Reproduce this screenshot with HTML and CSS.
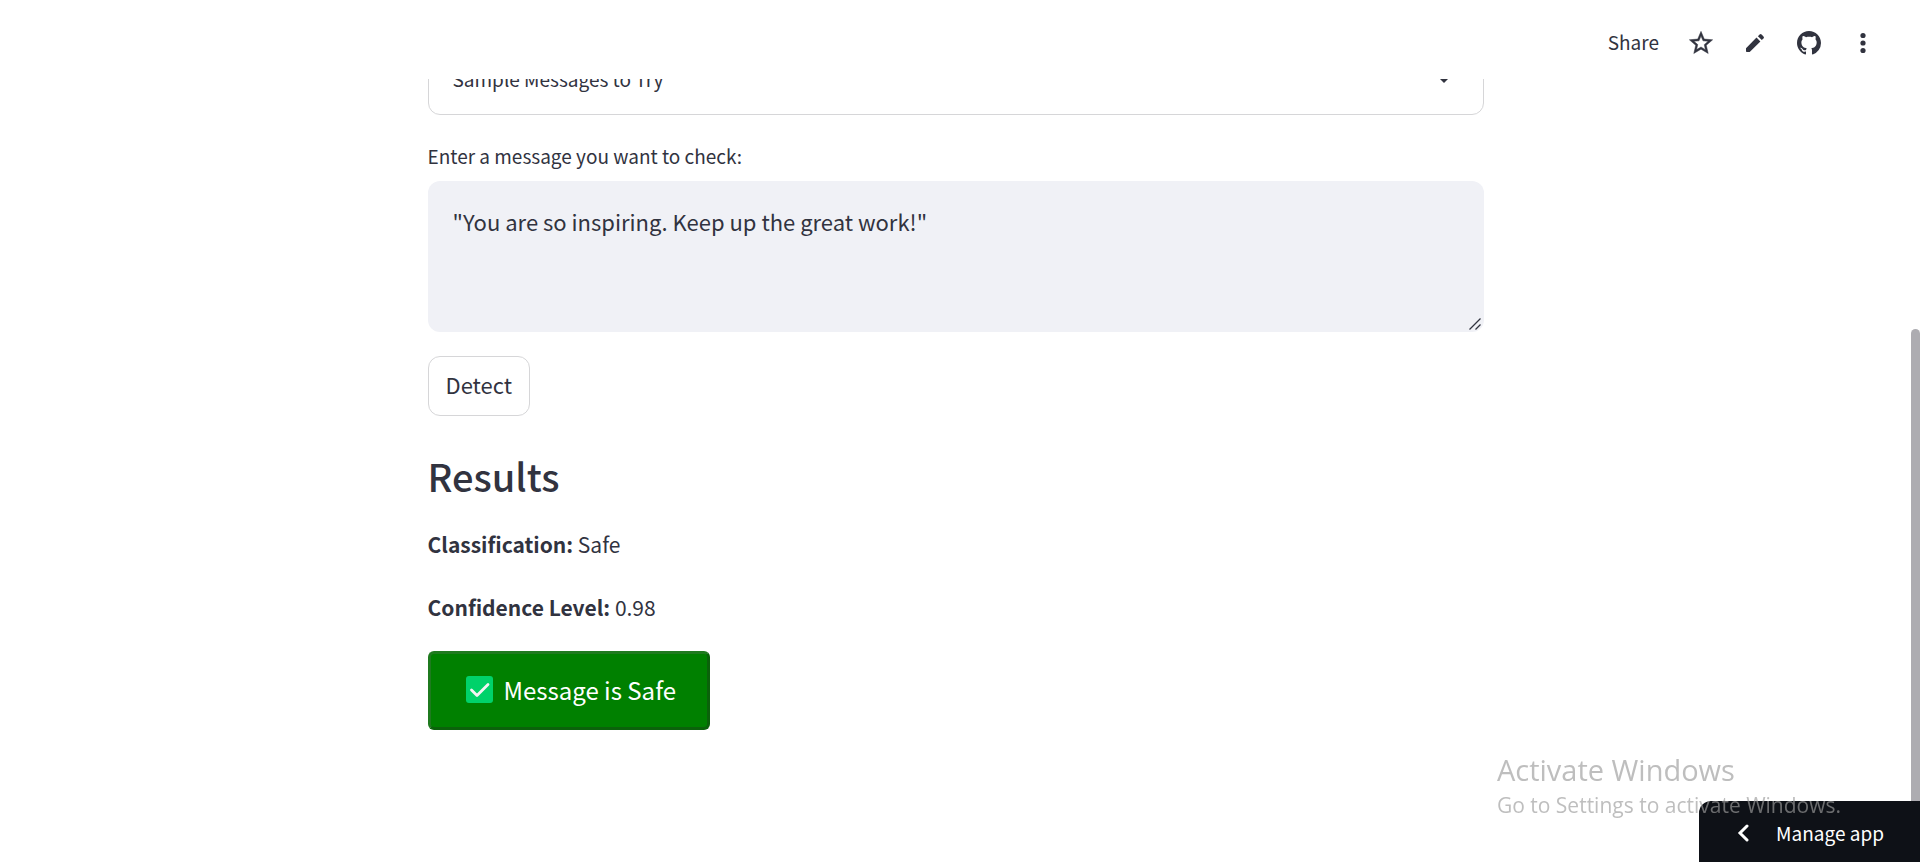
FILE: index.html
```
<!DOCTYPE html>
<html lang="en">
<head>
  <meta charset="UTF-8">
  <meta name="viewport" content="width=device-width, initial-scale=1.0">
  <title>Message Detector</title>
  <link rel="stylesheet" href="styles.css">
</head>
<body>
  <header class="toolbar">
    <button type="button" class="share">Share</button>
    <button type="button" class="icon-button" aria-label="Favorite">
      <svg width="28" height="28" viewBox="0 0 24 24" fill="currentColor" stroke="currentColor" stroke-width=".4"><path d="M22 9.24l-7.19-.62L12 2 9.19 8.63 2 9.24l5.46 4.73L5.82 21 12 17.27 18.18 21l-1.63-7.03L22 9.24zM12 15.4l-3.76 2.27 1-4.28-3.32-2.88 4.38-.38L12 6.1l1.71 4.04 4.38.38-3.32 2.88 1 4.28L12 15.4z"/></svg>
    </button>
    <button type="button" class="icon-button" aria-label="Edit">
      <svg width="24" height="24" viewBox="0 0 24 24" fill="currentColor"><path d="M3 17.3V20.2q0 .8.8.8H6.7L17.4 10.5 13.5 6.6zM14.9 5.2l3.9 3.9 1.7-1.7q1-1 0-2l-1.9-1.9q-1-1-2 0z"/></svg>
    </button>
    <button type="button" class="icon-button" aria-label="View source">
      <svg width="24" height="24" viewBox="0 0 16 16" fill="currentColor"><path d="M8 0C3.58 0 0 3.58 0 8c0 3.54 2.29 6.53 5.47 7.59.4.07.55-.17.55-.38 0-.19-.01-.82-.01-1.49-2.01.37-2.53-.49-2.69-.94-.09-.23-.48-.94-.82-1.13-.28-.15-.68-.52-.01-.53.63-.01 1.08.58 1.23.82.72 1.21 1.87.87 2.33.66.07-.52.28-.87.51-1.07-1.78-.2-3.64-.89-3.64-3.95 0-.87.31-1.59.82-2.15-.08-.2-.36-1.02.08-2.12 0 0 .67-.21 2.2.82.64-.18 1.32-.27 2-.27s1.36.09 2 .27c1.53-1.04 2.2-.82 2.2-.82.44 1.1.16 1.92.08 2.12.51.56.82 1.27.82 2.15 0 3.07-1.87 3.75-3.65 3.95.29.25.54.73.54 1.48 0 1.07-.01 1.93-.01 2.2 0 .21.15.46.55.38A8.01 8.01 0 0 0 16 8c0-4.42-3.58-8-8-8z"/></svg>
    </button>
    <button type="button" class="icon-button" aria-label="Menu">
      <svg width="24" height="24" viewBox="0 0 24 24" fill="currentColor"><circle cx="12" cy="4.5" r="2.6"/><circle cx="12" cy="12" r="2.6"/><circle cx="12" cy="19.5" r="2.6"/></svg>
    </button>
  </header>

  <main class="content">
    <details class="expander">
      <summary>
        <span>Sample Messages to Try</span>
        <svg width="24" height="24" viewBox="0 0 24 24" fill="currentColor"><path d="M5 9h14l-7 7z"/></svg>
      </summary>
    </details>

    <form class="message-form">
      <label for="message">Enter a message you want to check:</label>
      <div class="message-box">
        <textarea id="message">"You are so inspiring. Keep up the great work!"</textarea>
        <svg class="grip" width="12" height="12" viewBox="0 0 12 12" stroke="currentColor" stroke-width="1.3"><path d="M.5 11.5l11-11M6.5 11.5l5-5"/></svg>
      </div>
      <button type="button" class="detect">Detect</button>
    </form>

    <h2>Results</h2>
    <p><strong>Classification:</strong> Safe</p>
    <p><strong>Confidence Level:</strong> 0.98</p>
    <button type="button" class="result">
      <svg width="27" height="27" viewBox="0 0 27 27"><rect width="27" height="27" rx="3" fill="#00d26a"/><path d="M5.5 14l5.5 5.5L22 8.5" fill="none" stroke="#f4f4f4" stroke-width="2.8" stroke-linecap="round" stroke-linejoin="round"/></svg>
      Message is Safe
    </button>
  </main>

  <div class="scrollbar"></div>

  <button type="button" class="manage">
    <svg width="12" height="18" viewBox="0 0 12 18" fill="none" stroke="currentColor" stroke-width="3" stroke-linecap="round"><path d="M10 2L3 9l7 7"/></svg>
    Manage app
  </button>

  <div class="watermark">
    <div class="watermark-title">Activate Windows</div>
    <div>Go to Settings to activate Windows.</div>
  </div>
</body>
</html>
```
FILE: styles.css
```
* {
  box-sizing: border-box;
}

body {
  margin: 0;
  min-height: 100vh;
  background-color: #fff;
  color: #31333f;
  font-family: "Noto Sans CJK SC", "Noto Sans", sans-serif;
  font-size: 22px;
  line-height: 38px;
}

button,
textarea {
  font: inherit;
  color: inherit;
}

button {
  cursor: pointer;
}

svg {
  display: block;
  flex: none;
}

/* Top toolbar, stays over the scrolled content */
.toolbar {
  position: fixed;
  top: 0;
  left: 0;
  right: 0;
  z-index: 1;
  height: 79px;
  padding: 4px 30px 0 0;
  display: flex;
  justify-content: flex-end;
  align-items: flex-start;
  background-color: #fff;
}

.toolbar button {
  height: 78px;
  border: none;
  background: none;
}

.toolbar .share {
  height: 76px;
  padding: 0 15px;
  font-size: 19px;
}

.icon-button {
  width: 54px;
  padding: 0;
  display: flex;
  justify-content: center;
  align-items: center;
}

.content {
  width: 55%;
  margin: 0 auto;
  padding: 46px 9px 80px 0;
  box-sizing: content-box;
}

.expander {
  height: 69px;
  border: 1px solid #d6d6d8;
  border-radius: 12px;
}

.expander summary {
  height: 64px;
  padding: 0 27px 0 24px;
  display: flex;
  justify-content: space-between;
  align-items: center;
  list-style: none;
  font-size: 19px;
}

.message-form {
  padding-top: 22px;
}

.message-form label {
  display: block;
  padding-bottom: 6px;
  font-size: 19px;
}

.message-box {
  position: relative;
}

.message-box textarea {
  display: block;
  width: 100%;
  height: 151px;
  padding: 21px 25px;
  border: none;
  border-radius: 12px;
  background-color: #f0f1f6;
  resize: none;
  outline: none;
}

.grip {
  position: absolute;
  right: 3px;
  bottom: 2px;
}

.detect {
  height: 60px;
  margin-top: 24px;
  padding: 0 17px 4px;
  border: 1px solid #d6d6d8;
  border-radius: 12px;
  background-color: #fff;
}

h2 {
  margin: 31px 0 20px;
  font-size: 38px;
  font-weight: 500;
  line-height: 58px;
}

p {
  margin: 0 0 25px;
  font-size: 21px;
}

strong {
  font-weight: 700;
}

.result {
  height: 79px;
  padding: 0 31px 2px 35px;
  display: flex;
  align-items: center;
  gap: 11px;
  border: 3px solid;
  border-color: #1f7a1f #0b620b #0b620b #1f7a1f;
  border-radius: 6px;
  background-color: #008000;
  color: #fff;
  font-size: 24px;
}

.scrollbar {
  position: fixed;
  top: 329px;
  right: 0;
  bottom: 0;
  width: 9px;
  border-radius: 5px;
  background-color: #adacb1;
}

.manage {
  position: fixed;
  right: 0;
  bottom: 0;
  height: 61px;
  padding: 3px 36px 0 38px;
  display: flex;
  align-items: center;
  gap: 27px;
  border: none;
  border-top-left-radius: 12px;
  background-color: #0e1117;
  color: #fff;
  font-size: 19px;
}

.watermark {
  position: fixed;
  right: 79px;
  bottom: 42px;
  z-index: 2;
  color: rgba(157, 157, 157, 0.66);
  font-family: "Open Sans", sans-serif;
  font-size: 21px;
  line-height: 30px;
  pointer-events: none;
}

.watermark-title {
  font-size: 29px;
  line-height: 40px;
}
```
